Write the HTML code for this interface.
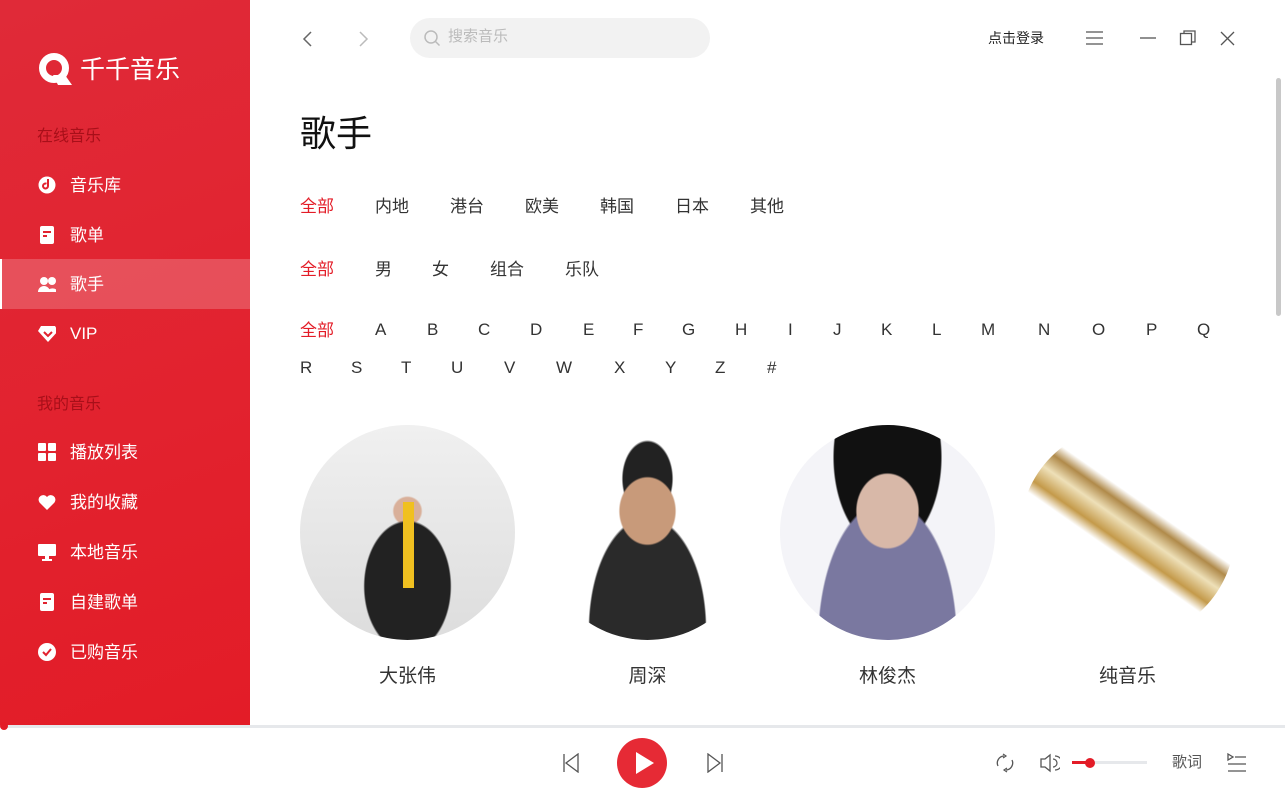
<!DOCTYPE html>
<html><head><meta charset="utf-8"><style>
*{margin:0;padding:0;box-sizing:border-box}
body{width:1285px;height:800px;overflow:hidden;font-family:"Liberation Sans","Noto Sans CJK SC",sans-serif;background:#fff;position:relative}
.side{position:absolute;left:0;top:0;width:250px;height:725px;background:linear-gradient(160deg,#e02a38,#e31c27)}
.logo{position:absolute;left:38px;top:52px;display:flex;align-items:center;color:#fff;font-size:25px}
.sec{position:absolute;left:37px;font-size:16px;color:#a80f19}
.item{position:absolute;left:0;width:250px;height:50px;display:flex;align-items:center;padding-left:38px;color:#fff;font-size:17px}
.item span.tx{position:relative;top:-2px}
.item .ic{width:18px;height:18px;margin-right:14px;display:flex;align-items:center;justify-content:center}
.item.act{background:rgba(255,255,255,.2);border-left:2px solid #fff;padding-left:36px}
.t{position:absolute;font-size:17px;color:#333}
.c{margin-top:-4px}
.r{color:#e31c27}
.av{position:absolute;top:425px;width:215px;height:215px;border-radius:50%;overflow:hidden}
.nm{position:absolute;top:661px;width:215px;text-align:center;font-size:19px;color:#333}
</style></head><body>
<div class="side">
 <div class="logo"><svg width="34" height="34" viewBox="0 0 34 34"><circle cx="16" cy="15" r="11.5" fill="none" stroke="#fff" stroke-width="7"/><path d="M15 22 L20 32 L34 32 L27 22Z" fill="#fff"/></svg><span style="margin-left:8px;position:relative;top:-2px">千千音乐</span></div>
 <div class="sec" style="top:122px">在线音乐</div>
 <div class="item" style="top:160px"><span class="ic"><svg width="18" height="18"><circle cx="9" cy="9" r="8.5" fill="#fff"/><path d="M10 3v7a2.5 2.5 0 1 1-1.5-2.3" stroke="#e1222f" stroke-width="2" fill="none"/></svg></span><span class="tx">音乐库</span></div>
 <div class="item" style="top:210px"><span class="ic"><svg width="18" height="18"><rect x="2" y="0" width="14" height="18" rx="2" fill="#fff"/><path d="M5 6h8M5 10h4" stroke="#e1222f" stroke-width="2"/></svg></span><span class="tx">歌单</span></div>
 <div class="item act" style="top:259px"><span class="ic"><svg width="20" height="16"><circle cx="6" cy="5" r="4" fill="#fff"/><circle cx="14" cy="5" r="4" fill="#fff"/><path d="M0 16a6 6 0 0 1 12 0zM9 16a6 6 0 0 1 11 0z" fill="#fff"/></svg></span><span class="tx">歌手</span></div>
 <div class="item" style="top:309px"><span class="ic"><svg width="20" height="18"><path d="M3 1h14l3 5-10 11L0 6z" fill="#fff"/><path d="M6 7l4 4 4-4" stroke="#e1222f" stroke-width="2" fill="none"/></svg></span><span class="tx" style="top:0">VIP</span></div>
 <div class="sec" style="top:390px">我的音乐</div>
 <div class="item" style="top:427px"><span class="ic"><svg width="18" height="18" fill="#fff"><rect x="0" y="0" width="8" height="8" rx="1"/><rect x="10" y="0" width="8" height="8" rx="1"/><rect x="0" y="10" width="8" height="8" rx="1"/><rect x="10" y="10" width="8" height="8" rx="1"/></svg></span><span class="tx">播放列表</span></div>
 <div class="item" style="top:477px"><span class="ic"><svg width="18" height="16"><path d="M9 16L1.5 8.5A4.5 4.5 0 0 1 9 3a4.5 4.5 0 0 1 7.5 5.5z" fill="#fff"/></svg></span><span class="tx">我的收藏</span></div>
 <div class="item" style="top:527px"><span class="ic"><svg width="18" height="18" fill="#fff"><rect x="0" y="1" width="18" height="12" rx="1"/><rect x="7" y="13" width="4" height="3"/><rect x="4" y="16" width="10" height="2"/></svg></span><span class="tx">本地音乐</span></div>
 <div class="item" style="top:577px"><span class="ic"><svg width="18" height="18"><rect x="2" y="0" width="14" height="18" rx="2" fill="#fff"/><path d="M5 6h8M5 10h4" stroke="#e1222f" stroke-width="2"/></svg></span><span class="tx">自建歌单</span></div>
 <div class="item" style="top:627px"><span class="ic"><svg width="18" height="18"><circle cx="9" cy="9" r="9" fill="#fff"/><path d="M5 9l3 3 5-6" stroke="#e1222f" stroke-width="2" fill="none"/></svg></span><span class="tx">已购音乐</span></div>
</div>
<svg style="position:absolute;left:302px;top:31px" width="12" height="16"><path d="M9 1L2 8l7 7" stroke="#666" stroke-width="1.5" fill="none"/></svg>
<svg style="position:absolute;left:357px;top:31px" width="12" height="16"><path d="M3 1l7 7-7 7" stroke="#bbb" stroke-width="1.5" fill="none"/></svg>
<div style="position:absolute;left:410px;top:18px;width:300px;height:40px;border-radius:20px;background:#f2f2f2;color:#bbb;font-size:15px;line-height:38px;padding-left:38px">搜索音乐</div>
<svg style="position:absolute;left:423px;top:29px" width="18" height="18"><circle cx="8" cy="8" r="6" stroke="#bbb" stroke-width="1.5" fill="none"/><path d="M12.5 12.5l4 4" stroke="#bbb" stroke-width="1.5"/></svg>
<div class="t" style="left:988px;top:28px;font-size:14px;color:#222">点击登录</div>
<svg style="position:absolute;left:1086px;top:31px" width="18" height="14"><path d="M0 1h17M0 7h17M0 13h17" stroke="#555" stroke-width="1.3"/></svg>
<svg style="position:absolute;left:1139px;top:30px" width="18" height="18"><path d="M1 8h16" stroke="#555" stroke-width="1.3"/></svg>
<svg style="position:absolute;left:1179px;top:30px" width="18" height="18"><rect x="1.5" y="3.5" width="11" height="11" stroke="#555" stroke-width="1.3" fill="#fff"/><path d="M5 3.5V1h11v11h-3" stroke="#555" stroke-width="1.3" fill="none"/></svg>
<svg style="position:absolute;left:1219px;top:30px" width="18" height="18"><path d="M2 2l13 13M15 2L2 15" stroke="#555" stroke-width="1.3"/></svg>
<div style="position:absolute;left:1276px;top:78px;width:5px;height:238px;border-radius:3px;background:#c8c8c8"></div>
<div class="t" style="left:300px;top:105px;font-size:36px;color:#111">歌手</div>
<div class="t r" style="left:300px;top:192px">全部</div><div class="t" style="left:375px;top:192px">内地</div><div class="t" style="left:450px;top:192px">港台</div><div class="t" style="left:525px;top:192px">欧美</div><div class="t" style="left:600px;top:192px">韩国</div><div class="t" style="left:675px;top:192px">日本</div><div class="t" style="left:750px;top:192px">其他</div>
<div class="t r" style="left:300px;top:255px">全部</div><div class="t" style="left:375px;top:255px">男</div><div class="t" style="left:432px;top:255px">女</div><div class="t" style="left:490px;top:255px">组合</div><div class="t" style="left:565px;top:255px">乐队</div>
<div class="t r" style="left:300px;top:316px">全部</div>
<div class="t" style="left:375px;top:320px">A</div><div class="t" style="left:427px;top:320px">B</div><div class="t" style="left:478px;top:320px">C</div><div class="t" style="left:530px;top:320px">D</div><div class="t" style="left:583px;top:320px">E</div><div class="t" style="left:633px;top:320px">F</div><div class="t" style="left:682px;top:320px">G</div><div class="t" style="left:735px;top:320px">H</div><div class="t" style="left:788px;top:320px">I</div><div class="t" style="left:833px;top:320px">J</div><div class="t" style="left:881px;top:320px">K</div><div class="t" style="left:932px;top:320px">L</div><div class="t" style="left:981px;top:320px">M</div><div class="t" style="left:1038px;top:320px">N</div><div class="t" style="left:1092px;top:320px">O</div><div class="t" style="left:1146px;top:320px">P</div><div class="t" style="left:1197px;top:320px">Q</div>
<div class="t" style="left:300px;top:358px">R</div><div class="t" style="left:351px;top:358px">S</div><div class="t" style="left:401px;top:358px">T</div><div class="t" style="left:451px;top:358px">U</div><div class="t" style="left:504px;top:358px">V</div><div class="t" style="left:556px;top:358px">W</div><div class="t" style="left:614px;top:358px">X</div><div class="t" style="left:665px;top:358px">Y</div><div class="t" style="left:715px;top:358px">Z</div><div class="t" style="left:767px;top:358px">#</div>
<div class="av" style="left:300px;background:linear-gradient(90deg,transparent 48%,#f0c020 48% 53%,transparent 53%) 0 60%/100% 40% no-repeat,radial-gradient(ellipse at 50% 75%,#222 0 28%,transparent 29%),radial-gradient(circle at 50% 40%,#d9b09a 0 8%,transparent 9%),linear-gradient(#f0f0f0,#ddd)"></div>
<div class="av" style="left:540px;background:radial-gradient(ellipse at 50% 40%,#c89a7a 0 18%,transparent 19%),radial-gradient(ellipse at 50% 25%,#222 0 16%,transparent 17%),radial-gradient(ellipse at 50% 95%,#2a2a2a 0 38%,transparent 39%),#fff"></div>
<div class="av" style="left:780px;background:radial-gradient(ellipse at 50% 40%,#d8b8a8 0 20%,transparent 21%),radial-gradient(ellipse at 50% 100%,#7a78a0 0 45%,transparent 46%),radial-gradient(ellipse at 50% 15%,#111 0 35%,transparent 36%),#f4f4f8"></div>
<div class="av" style="left:1020px;background:linear-gradient(35deg,transparent 42%,#c49a4a 46%,#eee0b8 52%,#b08a4a 57%,transparent 61%),#fff"></div>
<div class="nm" style="left:300px">大张伟</div><div class="nm" style="left:540px">周深</div><div class="nm" style="left:780px">林俊杰</div><div class="nm" style="left:1020px">纯音乐</div>
<div style="position:absolute;left:0;top:725px;width:1285px;height:3px;background:#e6e8eb"></div>
<div style="position:absolute;left:0;top:722px;width:8px;height:8px;border-radius:50%;background:#e31c27"></div>
<svg style="position:absolute;left:562px;top:753px" width="18" height="20"><path d="M2 1v18M16 1L4 10l12 9z" stroke="#555" stroke-width="1.3" fill="none"/></svg>
<div style="position:absolute;left:617px;top:738px;width:50px;height:50px;border-radius:50%;background:#e62a35"></div>
<svg style="position:absolute;left:634px;top:751px" width="22" height="24"><path d="M2 1l18 11L2 23z" fill="#fff"/></svg>
<svg style="position:absolute;left:706px;top:753px" width="18" height="20"><path d="M16 1v18M2 1l12 9-12 9z" stroke="#555" stroke-width="1.3" fill="none"/></svg>
<svg style="position:absolute;left:994px;top:752px" width="22" height="22"><path d="M4 14a7 7 0 0 1 6-10M18 8a7 7 0 0 1-6 10" stroke="#555" stroke-width="1.3" fill="none"/><path d="M9 2l3 2-3 2M13 16l-3 2 3 2" stroke="#555" stroke-width="1.2" fill="none"/></svg>
<svg style="position:absolute;left:1040px;top:753px" width="20" height="20"><path d="M1 6h4l5-4v16l-5-4H1z" stroke="#555" stroke-width="1.3" fill="none"/><path d="M13 6a4 4 0 0 1 0 8M15 3a7 7 0 0 1 0 14" stroke="#555" stroke-width="1.2" fill="none"/></svg>
<div style="position:absolute;left:1072px;top:761px;width:75px;height:3px;background:#e6e8eb"></div>
<div style="position:absolute;left:1072px;top:761px;width:18px;height:3px;background:#e31c27"></div>
<div style="position:absolute;left:1085px;top:758px;width:10px;height:10px;border-radius:50%;background:#e31c27"></div>
<div class="t" style="left:1172px;top:751px;font-size:15px;color:#555">歌词</div>
<svg style="position:absolute;left:1227px;top:753px" width="20" height="20"><path d="M1 1l5 3-5 3zM8 4h11M1 11h18M1 18h18" stroke="#555" stroke-width="1.3" fill="none"/></svg>
</body></html>
